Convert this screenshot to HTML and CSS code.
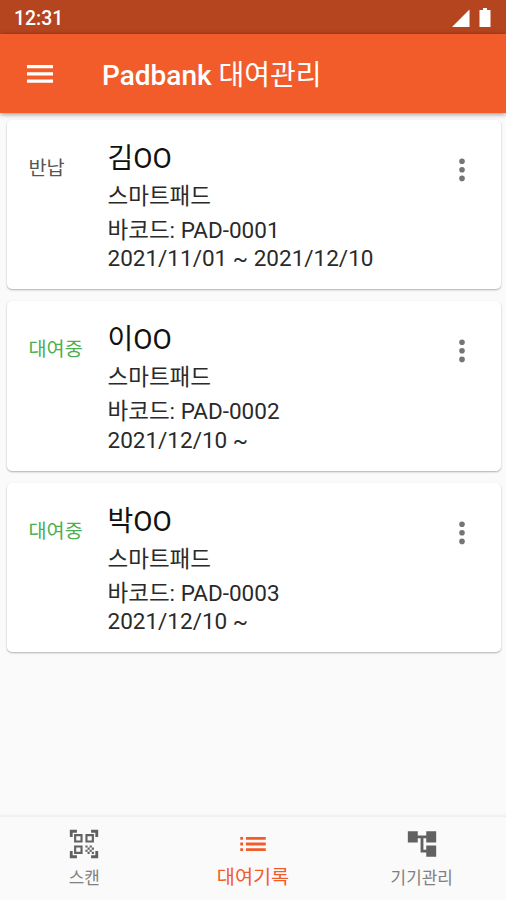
FILE: index.html
```html
<!DOCTYPE html>
<html lang="ko">
<head>
  <meta charset="UTF-8">
  <meta name="viewport" content="width=device-width, initial-scale=1.0">
  <title>Padbank 대여관리</title>
  <link rel="stylesheet" href="styles.css">
</head>
<body>
  <div class="statusbar">
    <span>12:31</span>
    <svg width="42" height="22" viewBox="0 0 42 22" fill="#fff">
      <path d="M1 20 18.500 2.500v17.500z"/>
      <path d="M28.500 3h3.500V1h4v2h3.500v17h-11z"/>
    </svg>
  </div>

  <header class="appbar">
    <svg class="menu" width="26" height="18" viewBox="0 0 26 18" fill="#fff">
      <path d="M0 0h26v3.2H0zM0 7.3h26v3.2H0zM0 14.6h26v3.2H0z"/>
    </svg>
    <h1>Padbank <span>대여관리</span></h1>
  </header>

  <main class="list">
    <div class="card">
      <span class="state">반납</span>
      <div class="info">
        <h2>김OO</h2>
        <p class="model">스마트패드</p>
        <p>바코드: PAD-0001</p>
        <p>2021/11/01 ~ 2021/12/10</p>
      </div>
      <svg class="more" width="6" height="24" viewBox="0 0 6 24"><circle cx="3" cy="3.2" r="2.8"/><circle cx="3" cy="11.8" r="2.8"/><circle cx="3" cy="20.4" r="2.8"/></svg>
    </div>
    <div class="card">
      <span class="state rented">대여중</span>
      <div class="info">
        <h2>이OO</h2>
        <p class="model">스마트패드</p>
        <p>바코드: PAD-0002</p>
        <p>2021/12/10 ~</p>
      </div>
      <svg class="more" width="6" height="24" viewBox="0 0 6 24"><circle cx="3" cy="3.2" r="2.8"/><circle cx="3" cy="11.8" r="2.8"/><circle cx="3" cy="20.4" r="2.8"/></svg>
    </div>
    <div class="card">
      <span class="state rented">대여중</span>
      <div class="info">
        <h2>박OO</h2>
        <p class="model">스마트패드</p>
        <p>바코드: PAD-0003</p>
        <p>2021/12/10 ~</p>
      </div>
      <svg class="more" width="6" height="24" viewBox="0 0 6 24"><circle cx="3" cy="3.2" r="2.8"/><circle cx="3" cy="11.8" r="2.8"/><circle cx="3" cy="20.4" r="2.8"/></svg>
    </div>
  </main>

  <nav class="bottom">
    <a class="tab">
      <svg width="34" height="34" viewBox="0 0 24 24">
        <path d="M9.5 6.5v3h-3v-3h3M11 5H5v6h6V5zm-1.5 9.5v3h-3v-3h3M11 13H5v6h6v-6zm6.500-6.500v3h-3v-3h3M19 5h-6v6h6V5zm-6 8h1.500v1.500H13V13zm1.500 1.500H16V16h-1.500v-1.500zM16 13h1.500v1.500H16V13zm-3 3h1.500v1.500H13V16zm1.500 1.500H16V19h-1.500v-1.500zM16 16h1.500v1.500H16V16zm1.500-1.500H19V16h-1.500v-1.500zm0 3H19V19h-1.500v-1.500zM22 7h-2V4h-3V2h5v5zm0 15v-5h-2v3h-3v2h5zM2 22h5v-2H4v-3H2v5zM2 2v5h2V4h3V2H2z"/>
      </svg>
      <span>스캔</span>
    </a>
    <a class="tab active">
      <svg width="34" height="34" viewBox="0 0 24 24">
        <path d="M3 13h2v-2H3v2zm0 4h2v-2H3v2zm0-8h2V7H3v2zm4 4h14v-2H7v2zm0 4h14v-2H7v2zM7 7v2h14V7H7z"/>
      </svg>
      <span>대여기록</span>
    </a>
    <a class="tab">
      <svg width="34" height="34" viewBox="0 0 24 24">
        <path d="M22 11V3h-7v3H9V3H2v8h7V8h2v10h4v3h7v-8h-7v3h-2V8h2v3z"/>
      </svg>
      <span>기기관리</span>
    </a>
  </nav>
</body>
</html>
```
FILE: styles.css
```css
* {
  box-sizing: border-box;
}
body {
  margin: 0;
  height: 900px;
  display: flex;
  flex-direction: column;
  overflow: hidden;
  background: #fafafa;
  color: #1c1c1c;
  font-family: Roboto, "Noto Sans CJK KR", sans-serif;
}
h1, h2, p {
  margin: 0;
  font-weight: 400;
  white-space: nowrap;
}
svg {
  display: block;
  flex: none;
}
.statusbar {
  height: 34px;
  flex: none;
  display: flex;
  align-items: center;
  justify-content: space-between;
  padding: 2px 13px 0 14px;
  background: #b5451f;
  color: #fff;
  font-size: 19.400px;
  font-weight: 500;
}
.appbar {
  height: 79px;
  flex: none;
  display: flex;
  align-items: center;
  padding-left: 27px;
  background: #f25c2a;
  color: #fff;
  box-shadow: 0 1px 5px rgba(0, 0, 0, .45);
  z-index: 1;
}
.menu {
  margin-right: 49px;
}
.appbar h1 {
  padding-top: 4px;
  font-size: 28px;
  line-height: 40px;
  font-weight: 500;
}
.appbar h1 span {
  font-weight: 400;
}
.list {
  flex: 1;
  display: flex;
  flex-direction: column;
  gap: 12px;
  padding: 6.500px 5.500px 0 6.500px;
}
.card {
  height: 169.500px;
  display: flex;
  align-items: flex-start;
  padding: 18px 36px 0 22px;
  background: #fff;
  border-radius: 5px;
  box-shadow: 0 1px 2px rgba(0, 0, 0, .3);
}
.state {
  width: 79px;
  padding-top: 17px;
  font-size: 19.700px;
  line-height: 28px;
  color: #555;
}
.rented {
  color: #4caf50;
}
.info {
  flex: 1;
  font-size: 22.500px;
  line-height: 28.500px;
  color: #2a2a2a;
}
.info h2 {
  font-size: 28px;
  line-height: 42px;
  color: #111;
}
.info .model {
  line-height: 34px;
  margin: -1px 0 3px;
}
.more {
  margin-top: 20px;
  fill: #757575;
}
.bottom {
  height: 84px;
  flex: none;
  display: flex;
  border-top: 1px solid #f0f0f0;
  box-shadow: 0 -1px 2px rgba(0, 0, 0, .05);
  background: #fafafa;
}
.tab {
  flex: 1;
  display: flex;
  flex-direction: column;
  align-items: center;
  padding-top: 10px;
  color: #808080;
  fill: #616161;
  font-size: 16.900px;
  line-height: 35px;
}
.active {
  color: #f25c2a;
  fill: #f25c2a;
  font-size: 19.700px;
  line-height: 33px;
}
```
